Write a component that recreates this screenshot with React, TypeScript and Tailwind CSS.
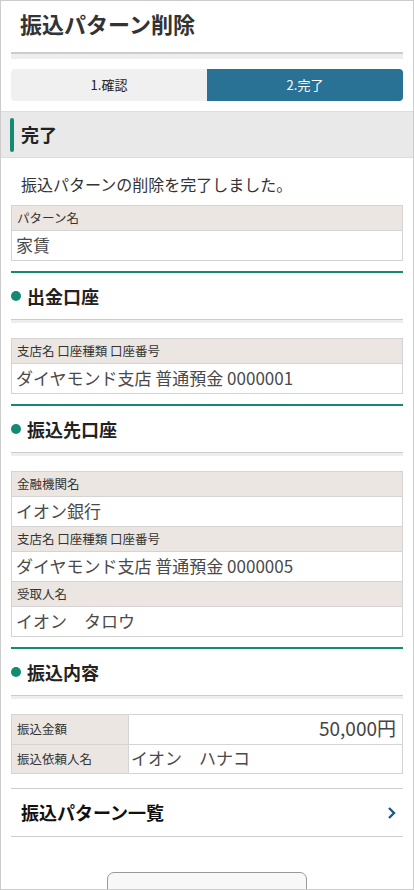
const font = { fontFamily: '"Noto Sans CJK JP", "Noto Sans", sans-serif' };

function SectionHeading({ title }: { title: string }) {
  return (
    <div className="mx-[10px]">
      <div className="h-[2px] bg-[#148a73]" />
      <div className="flex h-[46px] items-center gap-[6px]">
        <span className="h-[10px] w-[10px] rounded-full bg-[#148a73]" />
        <span className="text-[18px] font-bold text-[#222]">{title}</span>
      </div>
      <div className="h-px bg-[#ccc]" />
      <div className="h-[3px] bg-[#eee]" />
    </div>
  );
}

function StackTable({ rows }: { rows: [string, string][] }) {
  return (
    <div className="mx-[10px] border border-[#d4d4d4]">
      {rows.map(([label, value], i) => (
        <div key={i} className={i > 0 ? "border-t border-[#d4d4d4]" : ""}>
          <div className="flex h-[24px] items-center bg-[#ebe6e2] px-[5px] text-[12.5px] text-[#333]">{label}</div>
          <div className="flex h-[30px] items-center border-t border-[#d4d4d4] px-[4px] pb-[2px] text-[17px] text-[#4a4a4a]">{value}</div>
        </div>
      ))}
    </div>
  );
}

export default function App() {
  return (
    <div style={font} className="h-[890px] w-[414px] overflow-hidden border border-[#ccc] bg-white text-[#333]">
      {/* Title */}
      <div className="h-[51px] px-[19px] pt-[8px] text-[22px] font-bold leading-[28px] text-[#333]">振込パターン削除</div>
      <div className="mx-[10px]">
        <div className="h-[2px] bg-[#ccc]" />
        <div className="h-[5px] bg-[#eee]" />
      </div>

      {/* Steps */}
      <div className="mx-[10px] mt-[10px] flex h-[32px] overflow-hidden rounded-[4px] text-[13px]">
        <div className="flex flex-1 items-center justify-center bg-[#f0f0f0] text-[#222]">1.確認</div>
        <div className="flex flex-1 items-center justify-center bg-[#2a7295] text-white">2.完了</div>
      </div>

      {/* Done header */}
      <div className="mt-[10px] flex h-[47px] items-center border-y border-[#ddd] bg-[#e9e9e9] px-[9px]">
        <span className="h-[34px] w-[4px] rounded-full bg-[#148a73]" />
        <span className="ml-[7px] text-[18px] font-bold text-[#222]">完了</span>
      </div>

      <div className="pl-[20px] pt-[15px] pb-[9px] text-[16px] leading-[23px] text-[#333]">振込パターンの削除を完了しました。</div>

      <StackTable rows={[["パターン名", "家賃"]]} />

      <div className="mt-[10px]">
        <SectionHeading title="出金口座" />
      </div>
      <div className="mt-[15px]">
        <StackTable rows={[["支店名 口座種類 口座番号", "ダイヤモンド支店 普通預金 0000001"]]} />
      </div>

      <div className="mt-[10px]">
        <SectionHeading title="振込先口座" />
      </div>
      <div className="mt-[15px]">
        <StackTable
          rows={[
            ["金融機関名", "イオン銀行"],
            ["支店名 口座種類 口座番号", "ダイヤモンド支店 普通預金 0000005"],
            ["受取人名", "イオン　タロウ"],
          ]}
        />
      </div>

      <div className="mt-[10px]">
        <SectionHeading title="振込内容" />
      </div>
      <div className="mx-[10px] mt-[15px] border border-[#d4d4d4] text-[12.5px]">
        <div className="flex h-[29px]">
          <div className="flex w-[117px] items-center border-r border-[#d4d4d4] bg-[#ebe6e2] px-[5px]">振込金額</div>
          <div className="flex flex-1 items-center justify-end px-[6px] pb-[2px] text-[19px] text-[#444]">50,000円</div>
        </div>
        <div className="flex h-[29px] border-t border-[#d4d4d4]">
          <div className="flex w-[117px] items-center border-r border-[#d4d4d4] bg-[#ebe6e2] px-[5px]">振込依頼人名</div>
          <div className="flex flex-1 items-center px-[2px] pb-[2px] text-[17px] text-[#4a4a4a]">イオン　ハナコ</div>
        </div>
      </div>

      {/* Link row */}
      <div className="mx-[10px] mt-[14px] flex h-[49px] items-center justify-between border-y border-[#ccc] pl-[10px] pr-[6px]">
        <span className="text-[18px] font-bold text-[#111]">振込パターン一覧</span>
        <svg width="10" height="14" viewBox="0 0 10 14" fill="none">
          <path d="M2 2l5 5-5 5" stroke="#1d5a80" strokeWidth="2.4" />
        </svg>
      </div>

      <div className="mt-[35px] flex justify-center">
        <div className="h-[40px] w-[200px] rounded-[7px] border border-[#999] bg-[#f8f8f8]" />
      </div>
    </div>
  );
}
